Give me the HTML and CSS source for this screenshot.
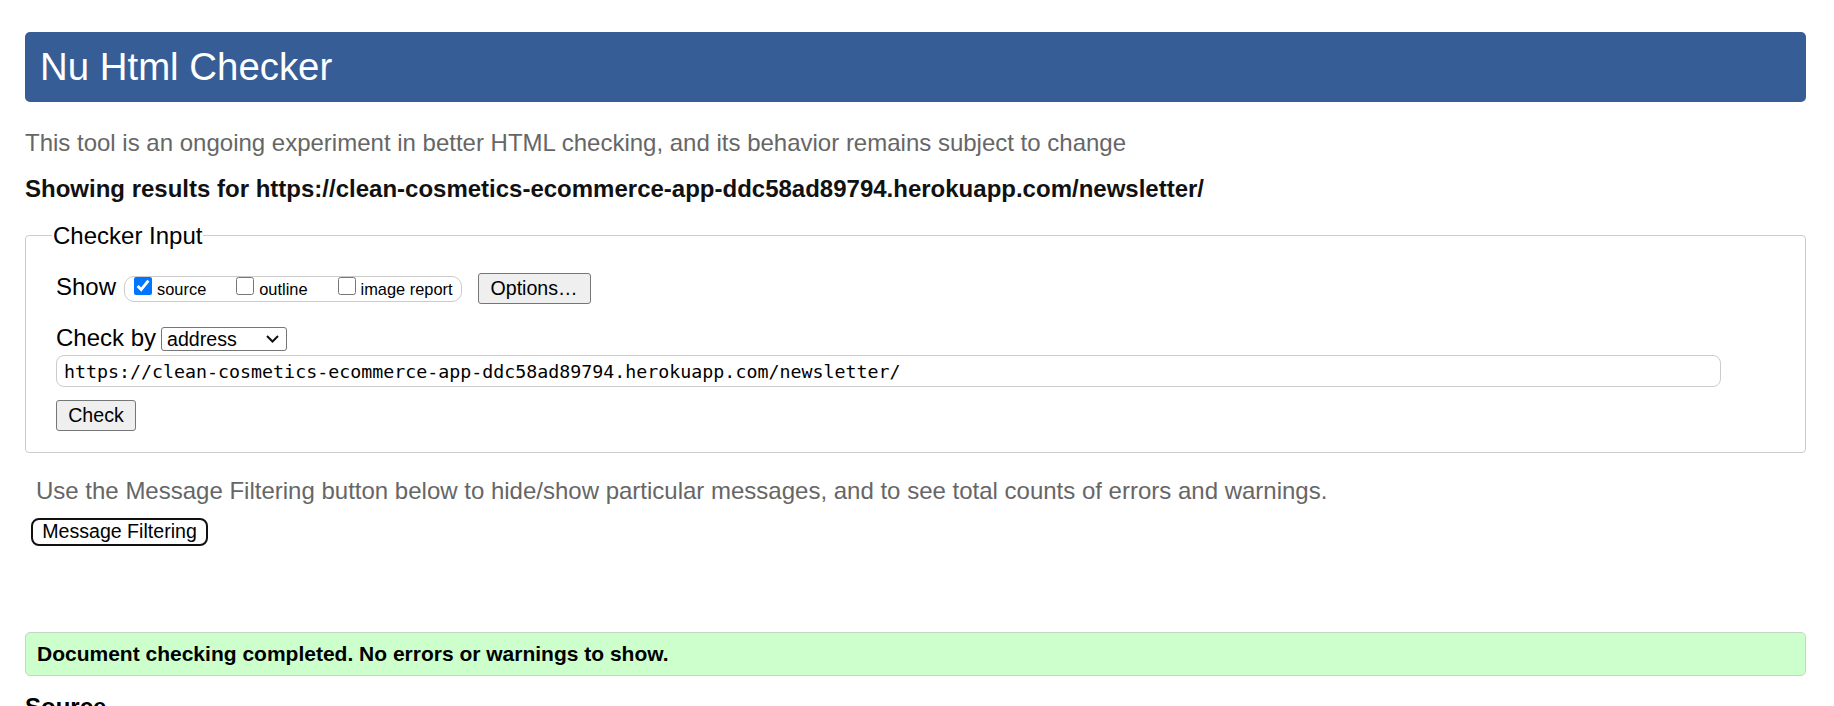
FILE: index.html
```html
<!DOCTYPE html>
<html lang="en">
<head>
<meta charset="utf-8">
<title>Nu Html Checker</title>
<link rel="stylesheet" href="styles.css">
</head>
<body>
<div class="page">
  <h1 class="title">Nu Html Checker</h1>
  <p class="intro">This tool is an ongoing experiment in better HTML checking, and its behavior remains subject to change</p>
  <p class="showing">Showing results for https://clean-cosmetics-ecommerce-app-ddc58ad89794.herokuapp.com/newsletter/</p>
  <fieldset class="checker">
    <legend class="legend">Checker Input</legend>
    <div class="row-show">
      <span class="lbl">Show</span>
      <span class="group">
        <label class="opt"><input class="cb" type="checkbox" checked><span>source</span></label>
        <label class="opt"><input class="cb" type="checkbox"><span>outline</span></label>
        <label class="opt"><input class="cb" type="checkbox"><span>image report</span></label>
      </span>
      <button class="btn btn-options" type="button">Options…</button>
    </div>
    <div class="row-by">
      <span class="lbl">Check by</span>
      <span class="sel-wrap">
        <select class="sel"><option>address</option><option>file upload</option><option>text input</option></select>
        <svg class="chev" width="13" height="8" viewBox="0 0 13 8"><path d="M1 1 L6.5 6.5 L12 1" fill="none" stroke="#111" stroke-width="2"/></svg>
      </span>
    </div>
    <input class="url" type="url" value="https://clean-cosmetics-ecommerce-app-ddc58ad89794.herokuapp.com/newsletter/">
    <button class="btn btn-check" type="button">Check</button>
  </fieldset>
  <p class="hint">Use the Message Filtering button below to hide/show particular messages, and to see total counts of errors and warnings.</p>
  <button class="btn-filter" type="button">Message Filtering</button>
  <div class="success">Document checking completed. No errors or warnings to show.</div>
  <h2 class="source">Source</h2>
</div>
</body>
</html>
```

FILE: styles.css
```css
html, body {
  margin: 0;
  padding: 0;
  background: #fff;
}
body {
  font-family: "Liberation Sans", Arial, sans-serif;
  color: #000;
}
.page {
  padding: 32px 28px 0 25px;
}
.title {
  margin: 0;
  height: 70px;
  line-height: 70px;
  padding-left: 15px;
  background: #365d95;
  color: #fff;
  font-size: 38.4px;
  font-weight: normal;
  border-radius: 5px;
}
.intro {
  margin: 27px 0 0 0;
  font-size: 24px;
  line-height: 27px;
  color: #666;
}
.showing {
  margin: 18.7px 0 0 0;
  font-size: 24px;
  line-height: 27px;
  font-weight: bold;
  color: #111;
}
.checker {
  margin: 20.3px 0 0 0;
  padding: 24px 30px 21.5px 30px;
  border: 1px solid #ccc;
  border-radius: 4px;
  min-width: 0;
}
.legend {
  margin-left: -4px;
  padding: 0 1px;
  font-size: 24px;
  line-height: 27px;
}
.row-show {
  display: flex;
  align-items: flex-start;
  height: 31px;
}
.lbl {
  font-size: 24px;
  line-height: 27px;
}
.group {
  display: flex;
  align-items: flex-start;
  gap: 30px;
  margin: 3px 0 0 8px;
  height: 24px;
  padding: 0 8px 0 9px;
  border: 1px solid #ccc;
  border-radius: 10px;
}
.opt {
  display: flex;
  align-items: baseline;
  gap: 5px;
  font-size: 16.4px;
  line-height: 18px;
}
.cb {
  margin: 0;
  width: 18px;
  height: 18px;
  accent-color: #0075ff;
}
.btn {
  font-family: "Liberation Sans", Arial, sans-serif;
  font-size: 19.6px;
  color: #000;
  background: #efefef;
  border: 1px solid #767676;
  border-radius: 3px;
  height: 31px;
  padding: 0 9px;
}
.btn-options {
  margin-left: 16px;
  width: 113px;
}
.row-by {
  display: flex;
  align-items: flex-start;
  margin-top: 20px;
  height: 27px;
}
.sel-wrap {
  position: relative;
  display: block;
  margin: 3px 0 0 5px;
  width: 126px;
  height: 24px;
}
.sel {
  display: block;
  appearance: none;
  -webkit-appearance: none;
  box-sizing: border-box;
  width: 126px;
  height: 24px;
  margin: 0;
  font-family: "Liberation Sans", Arial, sans-serif;
  font-size: 19.6px;
  line-height: 22px;
  padding: 0 0 0 5px;
  border: 1px solid #767676;
  border-radius: 3px;
  background: #fff;
  color: #000;
}
.chev {
  position: absolute;
  right: 8px;
  top: 8px;
  pointer-events: none;
}
.url {
  display: block;
  box-sizing: border-box;
  margin-top: 4.3px;
  width: calc(100% - 54px);
  height: 31.5px;
  padding: 0 7px;
  border: 1px solid #ccc;
  border-radius: 8px;
  font-family: "DejaVu Sans Mono", "Liberation Mono", monospace;
  font-size: 18.3px;
  color: #000;
}
.btn-check {
  display: block;
  margin-top: 13px;
  width: 80px;
}
.hint {
  margin: 23.5px 0 0 11px;
  font-size: 24px;
  line-height: 27px;
  color: #666;
}
.btn-filter {
  display: block;
  margin: 13.8px 0 0 6px;
  width: 177px;
  height: 28px;
  padding: 0 8px;
  font-family: "Liberation Sans", Arial, sans-serif;
  font-size: 19.6px;
  color: #000;
  background: #fff;
  border: 2px solid #111;
  border-radius: 8px;
}
.success {
  margin-top: 86px;
  padding: 9px 11px;
  background: #ccffcc;
  border: 1px solid #c4d7c4;
  border-radius: 5px;
  font-size: 21px;
  line-height: 24px;
  font-weight: bold;
}
.source {
  margin: 17.4px 0 0 0;
  font-size: 24px;
  line-height: 27px;
  font-weight: bold;
}
```
